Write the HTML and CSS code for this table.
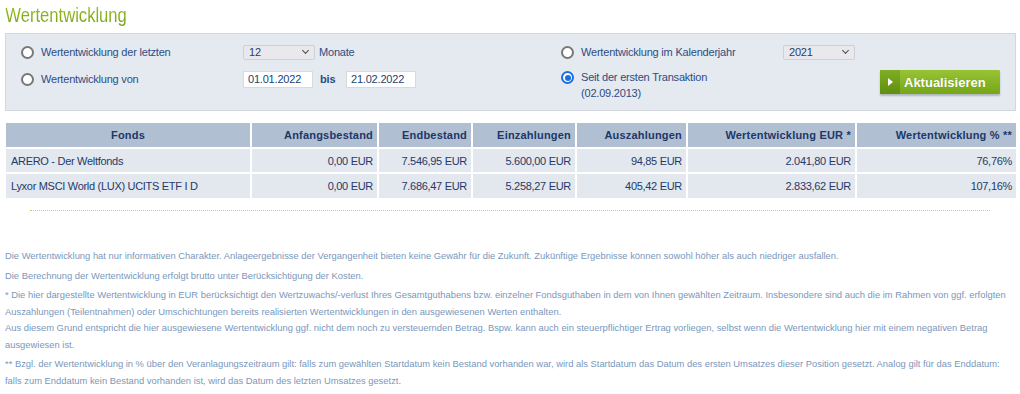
FILE: index.html
```html
<!DOCTYPE html>
<html lang="de">
<head>
<meta charset="utf-8">
<title>Wertentwicklung</title>
<link rel="stylesheet" href="styles.css">
</head>
<body>
<div class="page">
  <h1 class="title"><span class="title-text">Wertentwicklung</span></h1>

  <div class="panel">
    <div class="col col-left">
      <div class="row">
        <label class="opt"><span class="radio"></span><span>Wertentwicklung der letzten</span></label>
        <span class="select sel-months">12<span class="chev"></span></span>
        <span class="unit">Monate</span>
      </div>
      <div class="row">
        <label class="opt"><span class="radio"></span><span>Wertentwicklung von</span></label>
        <span class="input">01.01.2022</span>
        <span class="bis">bis</span>
        <span class="input">21.02.2022</span>
      </div>
    </div>
    <div class="col col-right">
      <div class="row">
        <label class="opt"><span class="radio"></span><span>Wertentwicklung im Kalenderjahr</span></label>
        <span class="select sel-year">2021<span class="chev"></span></span>
      </div>
      <div class="row row-top">
        <label class="opt opt-multi"><span class="radio checked"></span><span>Seit der ersten Transaktion<br>(02.09.2013)</span></label>
        <button class="btn"><span class="btn-icon"></span><span class="btn-text">Aktualisieren</span></button>
      </div>
    </div>
  </div>

  <table class="grid">
    <colgroup>
      <col class="c1"><col class="c2"><col class="c3"><col class="c4"><col class="c5"><col class="c6"><col class="c7">
    </colgroup>
    <thead>
      <tr>
        <th class="center">Fonds</th>
        <th>Anfangsbestand</th>
        <th>Endbestand</th>
        <th>Einzahlungen</th>
        <th>Auszahlungen</th>
        <th>Wertentwicklung EUR *</th>
        <th>Wertentwicklung % **</th>
      </tr>
    </thead>
    <tbody>
      <tr>
        <td class="left">ARERO - Der Weltfonds</td>
        <td>0,00 EUR</td>
        <td>7.546,95 EUR</td>
        <td>5.600,00 EUR</td>
        <td>94,85 EUR</td>
        <td>2.041,80 EUR</td>
        <td>76,76%</td>
      </tr>
      <tr>
        <td class="left">Lyxor MSCI World (LUX) UCITS ETF I D</td>
        <td>0,00 EUR</td>
        <td>7.686,47 EUR</td>
        <td>5.258,27 EUR</td>
        <td>405,42 EUR</td>
        <td>2.833,62 EUR</td>
        <td>107,16%</td>
      </tr>
    </tbody>
  </table>

  <div class="divider"></div>

  <div class="notes">
    <p>Die Wertentwicklung hat nur informativen Charakter. Anlageergebnisse der Vergangenheit bieten keine Gewähr für die Zukunft. Zukünftige Ergebnisse können sowohl höher als auch niedriger ausfallen.</p>
    <p>Die Berechnung der Wertentwicklung erfolgt brutto unter Berücksichtigung der Kosten.</p>
    <p>* Die hier dargestellte Wertentwicklung in EUR berücksichtigt den Wertzuwachs/-verlust Ihres Gesamtguthabens bzw. einzelner Fondsguthaben in dem von Ihnen gewählten Zeitraum. Insbesondere sind auch die im Rahmen von ggf. erfolgten Auszahlungen (Teilentnahmen) oder Umschichtungen bereits realisierten Wertentwicklungen in den ausgewiesenen Werten enthalten.<br>Aus diesem Grund entspricht die hier ausgewiesene Wertentwicklung ggf. nicht dem noch zu versteuernden Betrag. Bspw. kann auch ein steuerpflichtiger Ertrag vorliegen, selbst wenn die Wertentwicklung hier mit einem negativen Betrag ausgewiesen ist.</p>
    <p>** Bzgl. der Wertentwicklung in % über den Veranlagungszeitraum gilt: falls zum gewählten Startdatum kein Bestand vorhanden war, wird als Startdatum das Datum des ersten Umsatzes dieser Position gesetzt. Analog gilt für das Enddatum: falls zum Enddatum kein Bestand vorhanden ist, wird das Datum des letzten Umsatzes gesetzt.</p>
  </div>
</div>
</body>
</html>
```
FILE: styles.css
```css
* { box-sizing: border-box; }
html, body { margin: 0; padding: 0; background: #ffffff; }
body { font-family: "Liberation Sans", Arial, sans-serif; font-size: 11px; color: #27487c; }

.page { padding: 0 5px; width: 1020px; }

.title {
  margin: 0;
  padding-top: 4px;
  height: 33px;
  font-family: "Liberation Sans", Arial, sans-serif;
  font-weight: normal;
  font-size: 20px;
  line-height: 22px;
  color: #86ad18;
}
.title-text {
  display: inline-block;
  transform: scaleX(0.83);
  transform-origin: 2px 0;
  background: linear-gradient(#a5c21c, #6f9f1a);
  -webkit-background-clip: text;
  background-clip: text;
  color: transparent;
}

.panel {
  display: flex;
  height: 78px;
  background: #e5e9f0;
  border: 1px solid #d3d7dd;
  padding: 8px 0 0 15px;
  width: 1011px;
  letter-spacing: -0.2px;
}
.col { display: flex; flex-direction: column; }
.col-left { width: 540px; }
.col-right { flex: 1; }
.row { display: flex; align-items: center; height: 20px; margin-bottom: 7px; }
.row-top { align-items: flex-start; }

.opt { display: flex; align-items: center; gap: 7px; width: 222px; color: #2c4d82; }
.opt-multi { align-items: flex-start; line-height: 16px; }
.opt-multi .radio { margin-top: 2px; }

.radio {
  width: 13px; height: 13px;
  border: 2px solid #787878;
  border-radius: 50%;
  background: #fff;
  flex: none;
  position: relative;
}
.radio.checked { border-color: #1b6fe0; }
.radio.checked::after {
  content: "";
  position: absolute;
  left: 1.5px; top: 1.5px;
  width: 6px; height: 6px;
  border-radius: 50%;
  background: #1b6fe0;
}

.select {
  display: flex; align-items: center; justify-content: space-between;
  height: 15px;
  border: 1px solid #cdd0d5;
  border-radius: 2px;
  background: #e9e9ed;
  padding: 0 6px 0 5px;
  color: #233f6e;
  font-size: 11px;
}
.sel-months { width: 72px; }
.sel-year { width: 72px; }
.chev {
  width: 5px; height: 5px;
  border-right: 1px solid #4a4a4a;
  border-bottom: 1px solid #4a4a4a;
  transform: rotate(45deg);
  margin-top: -3px;
}
.unit { margin-left: 4px; color: #2c4d82; }

.input {
  display: inline-flex; align-items: center;
  width: 70px; height: 17px;
  background: #fff;
  border: 1px solid #d6d9de;
  padding-left: 4px;
  color: #233f6e;
}
.bis { width: 33px; padding-left: 7px; color: #2c4d82; font-weight: bold; }

.btn {
  display: flex; align-items: stretch;
  margin-left: 97px;
  margin-top: 1px;
  width: 120px; height: 24px;
  padding: 0;
  border: none;
  border-radius: 1px;
  background: linear-gradient(#98c433, #76a619);
  box-shadow: 0 2px 2px rgba(80, 90, 100, 0.35);
  cursor: pointer;
  font-family: "Liberation Sans", Arial, sans-serif;
  letter-spacing: 0;
}
.btn-icon {
  width: 20px;
  background: linear-gradient(#7fae24, #5f8e10);
  position: relative;
}
.btn-icon::after {
  content: "";
  position: absolute;
  left: 8px; top: 7.5px;
  border-left: 5px solid #fff;
  border-top: 4.5px solid transparent;
  border-bottom: 4.5px solid transparent;
}
.btn-text {
  display: flex; align-items: center;
  padding-left: 4px;
  color: #fff;
  font-size: 13px;
  font-weight: bold;
  text-shadow: 0 0 1px rgba(60, 90, 10, 0.4);
}

.grid {
  margin: 12px 0 0 1px;
  width: 1010px;
  table-layout: fixed;
  border-collapse: collapse;
}
.c1 { width: 245px; }
.c2 { width: 127px; }
.c3 { width: 94px; }
.c4 { width: 104px; }
.c5 { width: 111px; }
.c6 { width: 169px; }
.c7 { width: 160px; }
.grid th, .grid td {
  border: 2px solid #fff;
  padding: 0 4px;
  text-align: right;
  white-space: nowrap;
}
.grid tr > :first-child { border-left: none; }
.grid tr > :last-child { border-right: none; }
.grid thead th { border-top: none; }
.grid th {
  height: 25px;
  background: #b1bfd2;
  color: #1c3769;
  font-weight: bold;
  font-size: 11px;
  letter-spacing: 0.2px;
}
.grid th.center { text-align: center; }
.grid td {
  height: 25px;
  background: #e3e7ee;
  color: #1f3a6b;
  font-size: 11px;
  letter-spacing: -0.3px;
}
.grid td.left { text-align: left; padding-left: 5px; }
.grid tbody tr:last-child td { border-bottom: none; }

.divider {
  margin: 12px 0 0 25px;
  width: 960px;
  border-top: 1px dotted #c3db55;
}

.notes { margin-top: 37px; color: #7a97bc; font-size: 9.4px; }
.notes p { margin: 0 0 3px; line-height: 16.5px; }
```
